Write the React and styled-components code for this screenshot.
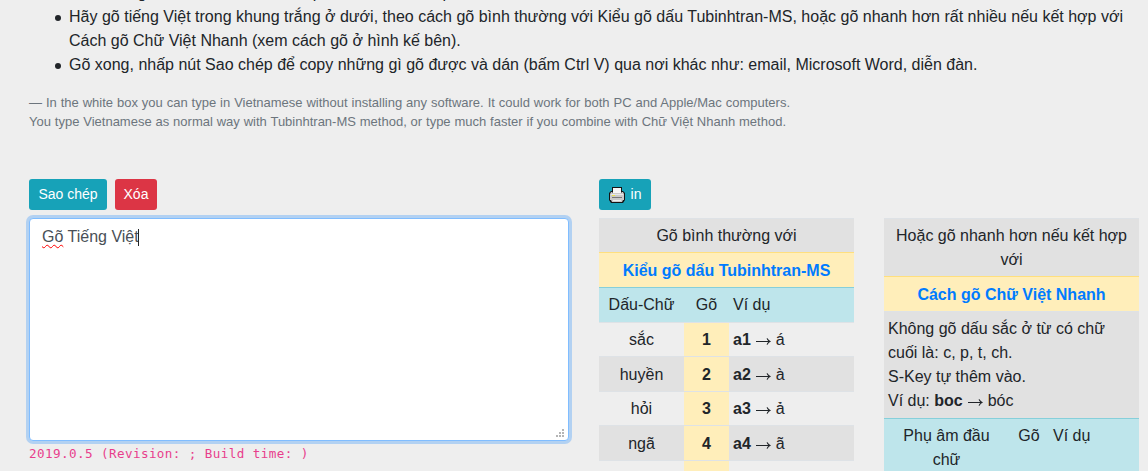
import React from "react";
import styled, { createGlobalStyle } from "styled-components";

const GlobalStyle = createGlobalStyle`
  *, *::before, *::after { box-sizing: border-box; }
  html, body { margin: 0; background: #eee; overflow: hidden; }
  body {
    font: 16px/24px "Liberation Sans", Arial, sans-serif;
    color: #212529;
  }
`;

const Page = styled.main`
  height: 471px;
  overflow: hidden;
  display: flex;
  flex-direction: column;
`;

const Steps = styled.ul`
  flex: none;
  margin: -19px 0 16px;
  padding: 0 0 0 55px;
  list-style: none;
`;

const Step = styled.li`
  display: flex;
  align-items: flex-start;
  gap: 8px;

  &::before {
    content: "";
    flex: none;
    width: 6px;
    height: 6px;
    margin-top: 10px;
    border-radius: 50%;
    background: #212529;
  }
`;

const Line = styled.span`
  display: block;
  width: ${(p) => (p.$w ? `${p.$w}px` : "auto")};
  height: 24px;
  white-space: nowrap;
  text-align: justify;
  text-align-last: ${(p) => (p.$w ? "justify" : "left")};
`;

const Note = styled.p`
  flex: none;
  margin: 0 0 0 29px;
  color: #6c757d;
  font-size: 13px;
  height: 86px;
`;

const NoteLine = styled(Line)`
  height: 19px;
  line-height: 19px;
`;

const Columns = styled.div`
  flex: none;
  display: grid;
  grid-template-columns: 540px 255px 255px;
  column-gap: 30px;
  padding-left: 29px;
  align-items: start;
`;

const Toolbar = styled.div`
  display: flex;
  gap: 8px;
  height: 31px;
  margin-bottom: 8px;
`;

const Button = styled.button`
  width: ${(p) => p.$w}px;
  height: 31px;
  padding: 0;
  border: 0;
  border-radius: 3px;
  background: ${(p) => (p.$danger ? "#dc3545" : "#17a2b8")};
  color: #fff;
  font: 14px/21px "Liberation Sans", Arial, sans-serif;
  display: flex;
  align-items: center;
  justify-content: center;
  gap: 6px;
`;

const Editor = styled.div`
  position: relative;
  height: 223px;
  padding: 6px 12px;
  border: 1px solid #80bdff;
  border-radius: 4px;
  background: #fff;
  box-shadow: 0 0 0 3px rgba(0, 123, 255, 0.25);
  color: #495057;
`;

const Misspelt = styled.span`
  text-decoration: underline wavy #f00 1px;
  text-decoration-skip-ink: none;
  text-underline-offset: 2px;
`;

const Caret = styled.span`
  display: inline-block;
  width: 1px;
  height: 17px;
  margin-left: -1px;
  vertical-align: -4px;
  background: #212529;
`;

const Grip = styled.svg`
  position: absolute;
  right: 3px;
  bottom: 2px;
`;

const Version = styled.code`
  display: block;
  margin-top: 4px;
  color: #e83e8c;
  font: 12.6px/18px "DejaVu Sans Mono", monospace;
  letter-spacing: 0.41px;
  white-space: pre;
`;

const Table = styled.div`
  display: flex;
  flex-direction: column;
`;

const tones = {
  stripe: ["#e1e1e1", "#dee2e6"],
  plain: ["#eee", "#dee2e6"],
  warning: ["#ffeeba", "#ffdf7e"],
  info: ["#bee5eb", "#86cfda"],
};

const Row = styled.div`
  display: grid;
  grid-template-columns: ${(p) => p.$cols || "1fr"};
  height: ${(p) => p.$h}px;
  background: ${(p) => tones[p.$tone][0]};
  border-top: 1px solid ${(p) => tones[p.$tone][1]};
`;

const Cell = styled.div`
  padding: ${(p) => (p.$low ? 6 : 5)}px 4px 0;
  text-align: ${(p) => (p.$left ? "left" : "center")};
  background: ${(p) => (p.$key ? "#ffeeba" : "transparent")};
  font-weight: ${(p) => (p.$key ? "bold" : "normal")};
`;

const Method = styled.strong`
  color: #007bff;
`;

const Arrow = styled.svg`
  display: inline-block;
  margin: 0 5px;
  vertical-align: 0;
`;

const To = () => (
  <Arrow width="15" height="7" viewBox="0 0 15 7">
    <path d="M0 3h12.2Q11 2 10.6.3h.9Q12.5 2.4 15 3.5 12.5 4.6 11.5 6.700h-.9Q11 5 12.200 4H0z" fill="#212529" />
  </Arrow>
);

const Printer = () => (
  <svg width="16" height="16" viewBox="0 0 16 16">
    <path d="M3 0h10v4h1l2 2v7l-2 3H2l-2-3V6l2-2h1z" fill="#141414" />
    <path d="M4 1h8v5H4z" fill="#f6f6f6" />
    <path d="M2 5h1l1 1h8l1-1h1l1 2v6h-1l-1 2H3l-1-2H1V7z" fill="#cacaca" />
    <path d="M2 7h12v1H2z" fill="#e8e8e8" />
    <path d="M3 8h3v1H3z" fill="#e8e04a" />
    <path d="M3 10h10v1H3z" fill="#777" />
    <path d="M4 13h8v1H4z" fill="#eee" />
  </svg>
);

const toneKeys = [
  ["sắc", 1, "á", 34],
  ["huyền", 2, "à", 35],
  ["hỏi", 3, "ả", 34],
  ["ngã", 4, "ã", 35],
];

export default function App() {
  return (
    <Page>
      <GlobalStyle />
      <Steps>
        <Step>
          <Line>Nếu không muốn cài thêm vào thì phải mở online từ phần mềm</Line>
        </Step>
        <Step>
          <div>
            <Line $w={1054}>
              Hãy gõ tiếng Việt trong khung trắng ở dưới, theo cách gõ bình thường với Kiểu gõ dấu
              Tubinhtran-MS, hoặc gõ nhanh hơn rất nhiều nếu kết hợp với
            </Line>
            <Line $w={391}>Cách gõ Chữ Việt Nhanh (xem cách gõ ở hình kế bên).</Line>
          </div>
        </Step>
        <Step>
          <Line $w={908}>
            Gõ xong, nhấp nút Sao chép để copy những gì gõ được và dán (bấm Ctrl V) qua nơi khác
            như: email, Microsoft Word, diễn đàn.
          </Line>
        </Step>
      </Steps>
      <Note>
        <NoteLine $w={761}>
          — In the white box you can type in Vietnamese without installing any software. It could
          work for both PC and Apple/Mac computers.
        </NoteLine>
        <NoteLine $w={757}>
          You type Vietnamese as normal way with Tubinhtran-MS method, or type much faster if you
          combine with Chữ Việt Nhanh method.
        </NoteLine>
      </Note>
      <Columns>
        <section>
          <Toolbar>
            <Button $w={78}>Sao chép</Button>
            <Button $w={42} $danger>Xóa</Button>
          </Toolbar>
          <Editor>
            <Misspelt>Gõ</Misspelt> Tiếng Việt
            <Caret />
            <Grip width="9" height="9" fill="#b5b5b5">
              <path d="M6 0h2v2H6zM3 3h2v2H3zM6 3h2v2H6zM0 6h2v2H0zM3 6h2v2H3zM6 6h2v2H6z" />
            </Grip>
          </Editor>
          <Version>2019.0.5 (Revision: ; Build time: )</Version>
        </section>
        <section>
          <Toolbar>
            <Button $w={52}>
              <Printer />
              in
            </Button>
          </Toolbar>
          <Table>
            <Row $tone="stripe" $h={34}><Cell>Gõ bình thường với</Cell></Row>
            <Row $tone="warning" $h={35}><Cell $low><Method>Kiểu gõ dấu Tubinhtran-MS</Method></Cell></Row>
            <Row $tone="info" $h={35} $cols="85px 45px 125px">
              <Cell>Dấu-Chữ</Cell>
              <Cell>Gõ</Cell>
              <Cell $left>Ví dụ</Cell>
            </Row>
            {toneKeys.map(([name, key, result, h], i) => (
              <Row key={name} $tone={i % 2 ? "stripe" : "plain"} $h={h} $cols="85px 45px 125px">
                <Cell $low={i % 2 === 1}>{name}</Cell>
                <Cell $low={i % 2 === 1} $key>{key}</Cell>
                <Cell $low={i % 2 === 1} $left><b>a{key}</b><To />{result}</Cell>
              </Row>
            ))}
            <Row $tone="plain" $h={34} $cols="85px 45px 125px">
              <Cell />
              <Cell $key />
              <Cell />
            </Row>
          </Table>
        </section>
        <section>
          <Toolbar />
          <Table>
            <Row $tone="stripe" $h={58}><Cell>Hoặc gõ nhanh hơn nếu kết hợp với</Cell></Row>
            <Row $tone="warning" $h={35}><Cell $low><Method>Cách gõ Chữ Việt Nhanh</Method></Cell></Row>
            <Row $tone="stripe" $h={107}>
              <Cell $left>
                Không gõ dấu sắc ở từ có chữ cuối là: c, p, t, ch.
                <br />
                S-Key tự thêm vào.
                <br />
                Ví dụ: <b>boc</b><To />bóc
              </Cell>
            </Row>
            <Row $tone="info" $h={60} $cols="125px 40px 90px">
              <Cell>Phụ âm đầu chữ</Cell>
              <Cell>Gõ</Cell>
              <Cell $left>Ví dụ</Cell>
            </Row>
          </Table>
        </section>
      </Columns>
    </Page>
  );
}
